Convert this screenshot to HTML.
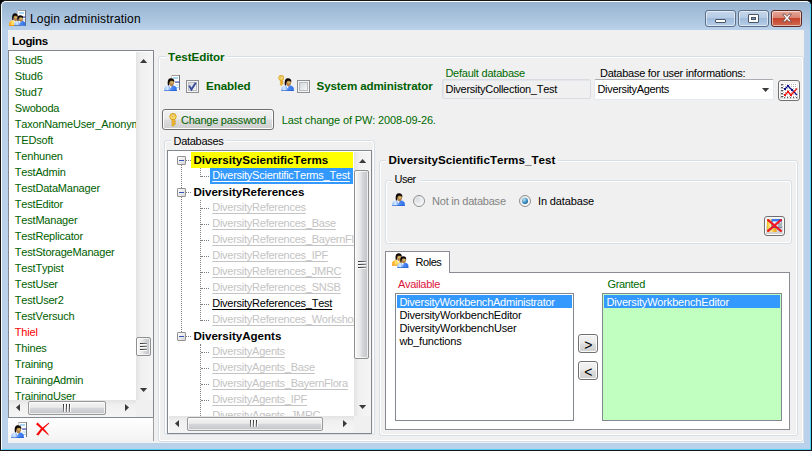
<!DOCTYPE html>
<html><head><meta charset="utf-8"><title>Login administration</title>
<style>
html,body{margin:0;padding:0;}
body{width:812px;height:451px;overflow:hidden;background:#000;position:relative;font-family:"Liberation Sans",sans-serif;font-size:11px;}
div,span,svg{position:absolute;box-sizing:border-box;}
.t{white-space:nowrap;line-height:13px;font-size:11px;color:#000;letter-spacing:-0.2px;font-kerning:none;}
.b{font-weight:bold;letter-spacing:0;font-size:11.6px;}
.g{color:#006000;}
.gr{color:#006a00;}
.r{color:#ff0000;}
.cr{color:#dc143c;}
.w{color:#fff;}
.u{text-decoration:underline;text-decoration-skip-ink:none;text-decoration-thickness:1px;text-underline-offset:2px;}
.lk{color:#c3c3c3;text-decoration:underline;text-decoration-skip-ink:none;text-decoration-thickness:1px;text-underline-offset:2px;}
.tvb{letter-spacing:-0.03px;}
.tvr{letter-spacing:-0.25px;}
.dis{color:#838383;}
.win{left:0;top:0;width:812px;height:451px;border-radius:6px 6px 0 0;background:#b9d1ea;border:1px solid #141414;overflow:hidden;}
.winin{left:0;top:0;width:810px;height:449px;border-radius:5px 5px 0 0;border:1px solid #fbfdff;border-bottom-color:#4fd0f8;border-right-color:#4fd0f8;background:linear-gradient(#97b3d0 0px,#b9d1ea 28px,#b9d1ea 100%);}
.client{left:8px;top:30px;width:796px;height:413px;background:#f0f0f0;}
.title{font-size:12px;line-height:15px;color:#000;}
.gb{border:1px solid #d5dfe5;border-radius:3px;box-shadow:inset 0 0 0 1px #fff;}
.gbl{background:#f0f0f0;padding:0 2px;}
.lb{border:1px solid #828790;background:#fff;overflow:hidden;}
.btn{border:1px solid #707070;border-radius:3px;background:linear-gradient(#f2f2f2 0%,#ebebeb 48%,#dddddd 52%,#cfcfcf 100%);box-shadow:inset 0 0 0 1px #fcfcfc;}
.tb{border:1px solid #abadb3;background:#fff;border-radius:2px;}
.sbv{background:linear-gradient(90deg,#e3e3e3,#f0f0f0 30%,#f5f5f5);}
.sbh{background:linear-gradient(#e3e3e3,#f0f0f0 30%,#f5f5f5);}
.thv{border:1px solid #8f8f8f;border-radius:2px;background:linear-gradient(90deg,#f8f8f8 0%,#e8e8ea 40%,#d4d5d8 60%,#c2c3c8 100%);box-shadow:inset 0 0 0 1px rgba(255,255,255,.7);}
.thh{border:1px solid #979797;border-radius:2px;background:linear-gradient(#f5f5f5 0%,#e9e9eb 45%,#d6d7da 50%,#c4c5c9 100%);box-shadow:inset 0 0 0 1px rgba(255,255,255,.7);}
.cb{border:1px solid #8e8f8f;background:#f4f4f4;}
.cbi{left:1px;top:1px;width:9px;height:9px;border:1px solid #b9bec4;background:linear-gradient(135deg,#d4d8dc,#f6f6f6);}
.sel{background:#3399ff;}
.dot{border-left:1px dotted #808080;width:1px;}
.doth{border-top:1px dotted #808080;height:1px;}
</style></head>
<body>
<div class="win"><div class="winin"></div></div>
<svg style="left:17px;top:10px" width="9" height="16"><rect x="0" y="0" width="9" height="16" fill="#fff"/><rect x="0" y="0" width="9" height="1" fill="#9c9c9c"/><rect x="8" y="0" width="1" height="16" fill="#707078"/><rect x="0" y="0" width="1" height="16" fill="#c8c8c8"/><rect x="2" y="2" width="5" height="2" fill="#a8d4f0"/><rect x="4.05" y="6.5" width="4.5" height="1.2" fill="#3848a8"/><rect x="4.5" y="9.5" width="3.6" height="1" fill="#a8d4f0"/><rect x="4.5" y="12" width="3.6" height="1" fill="#a8d4f0"/></svg>
<svg style="left:9.2px;top:12.8px" width="11.05" height="13.23" viewBox="0 0 13 13.5" preserveAspectRatio="none"><defs><linearGradient id="p3" x1="0" x2="1" y1="0" y2="0"><stop offset="0" stop-color="#ff9a10"/><stop offset="0.3" stop-color="#ffe26a"/><stop offset="1" stop-color="#ffb020"/></linearGradient></defs><path d="M0.2 13.2 L0.2 10.6 C0.4 8.8 2.2 7.6 4.4 7.2 L8.8 7.2 C11 7.6 12.8 8.8 12.8 10.6 L12.8 13.2 Z" fill="url(#p3)"/><path d="M0.2 12.4 L12.8 12.4 L12.8 13.2 L0.2 13.2 Z" fill="#e88a00"/><path d="M5 7.2 L6.6 10.6 L8.2 7.2 Z" fill="#ffffff"/><path d="M5 2.6 C6 1.6 9.6 1.8 10.1 3.6 C10.4 5.6 9.6 8.2 7.4 8.4 C5.6 8.4 4.8 6.4 5 2.6 Z" fill="#b8804e"/><ellipse cx="7.8" cy="4.6" rx="1.5" ry="1.1" fill="#c8c060"/><path d="M3.9 7.2 C3.5 4.8 3.6 2.4 4.6 1.2 C5.6 0 8.4 -0.1 9.6 1.2 C10.4 2.1 10.4 3.2 10.2 4 C9.4 2.8 7.6 2.6 6.2 3 C5.4 3.4 5.2 5.8 5 7.4 Z" fill="#100806"/></svg>
<svg style="left:14px;top:15px" width="11.57" height="10.8" viewBox="0 0 13 13.5" preserveAspectRatio="none"><defs><linearGradient id="p4" x1="0" x2="1" y1="0" y2="0"><stop offset="0" stop-color="#9cc4fb"/><stop offset="0.28" stop-color="#d6e8ff"/><stop offset="0.55" stop-color="#4f8cf4"/><stop offset="1" stop-color="#2f6fe8"/></linearGradient></defs><path d="M0.2 13.2 L0.2 10.6 C0.4 8.8 2.2 7.6 4.4 7.2 L8.8 7.2 C11 7.6 12.8 8.8 12.8 10.6 L12.8 13.2 Z" fill="url(#p4)"/><path d="M0.2 12.4 L12.8 12.4 L12.8 13.2 L0.2 13.2 Z" fill="#1f56c8"/><path d="M5 7.2 L6.6 10.6 L8.2 7.2 Z" fill="#ffffff"/><path d="M5 2.6 C6 1.6 9.6 1.8 10.1 3.6 C10.4 5.6 9.6 8.2 7.4 8.4 C5.6 8.4 4.8 6.4 5 2.6 Z" fill="#b8804e"/><ellipse cx="7.8" cy="4.6" rx="1.5" ry="1.1" fill="#c8c060"/><path d="M3.9 7.2 C3.5 4.8 3.6 2.4 4.6 1.2 C5.6 0 8.4 -0.1 9.6 1.2 C10.4 2.1 10.4 3.2 10.2 4 C9.4 2.8 7.6 2.6 6.2 3 C5.4 3.4 5.2 5.8 5 7.4 Z" fill="#100806"/></svg>
<span class="t title" style="left:30px;top:11.5px;letter-spacing:0.17px" id="title">Login administration</span>
<div class="" style="left:705px;top:10px;width:31px;height:17px;border:1px solid #5d7088;border-radius:3px;background:linear-gradient(#c4d6ec 0%,#b6cbe5 45%,#a0bbdb 50%,#b5cde8 100%);box-shadow:inset 0 0 0 1px rgba(255,255,255,.55);"></div>
<div class="" style="left:738px;top:10px;width:31px;height:17px;border:1px solid #5d7088;border-radius:3px;background:linear-gradient(#c4d6ec 0%,#b6cbe5 45%,#a0bbdb 50%,#b5cde8 100%);box-shadow:inset 0 0 0 1px rgba(255,255,255,.55);"></div>
<div class="" style="left:771px;top:10px;width:31px;height:17px;border:1px solid #5b2a22;border-radius:3px;background:linear-gradient(#e6a99c 0%,#d98473 45%,#c8432b 50%,#cf6850 100%);box-shadow:inset 0 0 0 1px rgba(255,255,255,.55);"></div>
<div class="" style="left:715px;top:19px;width:11px;height:4px;background:#fff;border:1px solid #4a5566;border-radius:1px;"></div>
<div class="" style="left:748px;top:14px;width:11px;height:9px;background:#fff;border:1px solid #4a5566;border-radius:1px;"></div>
<div class="" style="left:751px;top:17px;width:5px;height:3px;background:#7f96b6;border:1px solid #4a5566;"></div>
<svg style="left:780.5px;top:13px" width="12" height="10.4" viewBox="0 0 15 13"><path d="M2 1.5 L5 1.5 L7.5 4.3 L10 1.5 L13 1.5 L9.3 6.3 L13 11 L10 11 L7.5 8.2 L5 11 L2 11 L5.7 6.3 Z" fill="#fff" stroke="#5a4040" stroke-width="0.9"/></svg>
<div class="client"></div>
<span id="t1" class="t b" style="left:12px;top:34.2px;letter-spacing:-0.383px;">Logins</span>
<div class="" style="left:8px;top:418px;width:146px;height:23px;background:linear-gradient(#fff,#f3f3f3);"></div>
<div class="" style="left:153px;top:418px;width:1px;height:23px;background:#a0a0a0;"></div>
<div class="lb" style="left:8px;top:50px;width:146px;height:368px;"></div>
<div class="" style="left:9px;top:52px;width:127px;height:348px;overflow:hidden;"><span class="t g" style="left:5.8px;top:1.5px;" id="n0">Stud5</span><span class="t g" style="left:5.8px;top:17.5px;" id="n1">Stud6</span><span class="t g" style="left:5.8px;top:33.5px;" id="n2">Stud7</span><span class="t g" style="left:5.8px;top:49.5px;" id="n3">Swoboda</span><span class="t g" style="left:5.8px;top:65.5px;" id="n4">TaxonNameUser_Anonymous</span><span class="t g" style="left:5.8px;top:81.5px;" id="n5">TEDsoft</span><span class="t g" style="left:5.8px;top:97.5px;" id="n6">Tenhunen</span><span class="t g" style="left:5.8px;top:113.5px;" id="n7">TestAdmin</span><span class="t g" style="left:5.8px;top:129.5px;" id="n8">TestDataManager</span><span class="t g" style="left:5.8px;top:145.5px;" id="n9">TestEditor</span><span class="t g" style="left:5.8px;top:161.5px;" id="n10">TestManager</span><span class="t g" style="left:5.8px;top:177.5px;" id="n11">TestReplicator</span><span class="t g" style="left:5.8px;top:193.5px;" id="n12">TestStorageManager</span><span class="t g" style="left:5.8px;top:209.5px;" id="n13">TestTypist</span><span class="t g" style="left:5.8px;top:225.5px;" id="n14">TestUser</span><span class="t g" style="left:5.8px;top:241.5px;" id="n15">TestUser2</span><span class="t g" style="left:5.8px;top:257.5px;" id="n16">TestVersuch</span><span class="t r" style="left:5.8px;top:273.5px;" id="n17">Thiel</span><span class="t g" style="left:5.8px;top:289.5px;" id="n18">Thines</span><span class="t g" style="left:5.8px;top:305.5px;" id="n19">Training</span><span class="t g" style="left:5.8px;top:321.5px;" id="n20">TrainingAdmin</span><span class="t g" style="left:5.8px;top:337.5px;" id="n21">TrainingUser</span></div>
<div class="sbv" style="left:136px;top:52px;width:17px;height:348px;"></div>
<svg style="left:139.4px;top:57.5px" width="9.2" height="6"><polygon points="1,5 8.2,5 4.6,1" fill="#3a3a3a"/></svg>
<svg style="left:139.4px;top:387px" width="9.2" height="6"><polygon points="1,1 8.2,1 4.6,5" fill="#3a3a3a"/></svg>
<div class="thv" style="left:136px;top:337px;width:15px;height:19px;"></div>
<div class="" style="left:139.9px;top:343px;width:7.5px;height:1px;background:linear-gradient(90deg,#2c2c2c,#8a8a8a);box-shadow:0 1px 0 rgba(255,255,255,.85);"></div><div class="" style="left:139.9px;top:346px;width:7.5px;height:1px;background:linear-gradient(90deg,#2c2c2c,#8a8a8a);box-shadow:0 1px 0 rgba(255,255,255,.85);"></div><div class="" style="left:139.9px;top:349px;width:7.5px;height:1px;background:linear-gradient(90deg,#2c2c2c,#8a8a8a);box-shadow:0 1px 0 rgba(255,255,255,.85);"></div>
<div class="sbh" style="left:9px;top:400px;width:127px;height:17px;"></div>
<div class="" style="left:136px;top:400px;width:17px;height:17px;background:#f0f0f0;"></div>
<svg style="left:15px;top:402.9px" width="6" height="9.2"><polygon points="5,1 5,8.2 1,4.6" fill="#3a3a3a"/></svg>
<svg style="left:123.7px;top:402.9px" width="6" height="9.2"><polygon points="1,1 1,8.2 5,4.6" fill="#3a3a3a"/></svg>
<div class="thh" style="left:28px;top:401px;width:78px;height:14px;"></div>
<div class="" style="left:63.1px;top:404.1px;width:1px;height:7.5px;background:linear-gradient(#2c2c2c,#8a8a8a);box-shadow:1px 0 0 rgba(255,255,255,.85);"></div><div class="" style="left:66.1px;top:404.1px;width:1px;height:7.5px;background:linear-gradient(#2c2c2c,#8a8a8a);box-shadow:1px 0 0 rgba(255,255,255,.85);"></div><div class="" style="left:69.1px;top:404.1px;width:1px;height:7.5px;background:linear-gradient(#2c2c2c,#8a8a8a);box-shadow:1px 0 0 rgba(255,255,255,.85);"></div>
<svg style="left:18px;top:422px" width="9" height="15"><rect x="0" y="0" width="9" height="15" fill="#fff"/><rect x="0" y="0" width="9" height="1" fill="#9c9c9c"/><rect x="8" y="0" width="1" height="15" fill="#707078"/><rect x="0" y="0" width="1" height="15" fill="#c8c8c8"/><rect x="2" y="2" width="5" height="2" fill="#a8d4f0"/><rect x="4.05" y="6.5" width="4.5" height="1.2" fill="#3848a8"/><rect x="4.5" y="9.5" width="3.6" height="1" fill="#a8d4f0"/><rect x="4.5" y="12" width="3.6" height="1" fill="#a8d4f0"/></svg>
<svg style="left:11px;top:424.8px" width="13" height="13.5" viewBox="0 0 13 13.5" preserveAspectRatio="none"><defs><linearGradient id="p31" x1="0" x2="1" y1="0" y2="0"><stop offset="0" stop-color="#9cc4fb"/><stop offset="0.28" stop-color="#d6e8ff"/><stop offset="0.55" stop-color="#4f8cf4"/><stop offset="1" stop-color="#2f6fe8"/></linearGradient></defs><path d="M0.2 13.2 L0.2 10.6 C0.4 8.8 2.2 7.6 4.4 7.2 L8.8 7.2 C11 7.6 12.8 8.8 12.8 10.6 L12.8 13.2 Z" fill="url(#p31)"/><path d="M0.2 12.4 L12.8 12.4 L12.8 13.2 L0.2 13.2 Z" fill="#1f56c8"/><path d="M5 7.2 L6.6 10.6 L8.2 7.2 Z" fill="#ffffff"/><path d="M5 2.6 C6 1.6 9.6 1.8 10.1 3.6 C10.4 5.6 9.6 8.2 7.4 8.4 C5.6 8.4 4.8 6.4 5 2.6 Z" fill="#b8804e"/><ellipse cx="7.8" cy="4.6" rx="1.5" ry="1.1" fill="#c8c060"/><path d="M3.9 7.2 C3.5 4.8 3.6 2.4 4.6 1.2 C5.6 0 8.4 -0.1 9.6 1.2 C10.4 2.1 10.4 3.2 10.2 4 C9.4 2.8 7.6 2.6 6.2 3 C5.4 3.4 5.2 5.8 5 7.4 Z" fill="#100806"/></svg>
<svg style="left:35px;top:421px" width="16" height="17" viewBox="35 421 16 17"><path d="M36.0 424.2 L37.6 422.6 L42.6 427.4 L48.6 422.8 L49.2 423.4 L43.8 428.6 L48.0 433.4 L49.0 435.8 L47.2 434.2 L42.4 430.0 L38.4 435.6 L36.2 434.6 L41.0 428.6 Z" fill="#f80808"/></svg>
<div class="gb" style="left:158px;top:56px;width:646px;height:386px;"></div>
<div class="gbl" style="left:166px;top:50px;width:61px;height:13px;"></div>
<span id="t2" class="t b g" style="left:168px;top:50.2px;letter-spacing:-0.084px;">TestEditor</span>
<svg style="left:171px;top:75px" width="9" height="15"><rect x="0" y="0" width="9" height="15" fill="#fff"/><rect x="0" y="0" width="9" height="1" fill="#9c9c9c"/><rect x="8" y="0" width="1" height="15" fill="#707078"/><rect x="0" y="0" width="1" height="15" fill="#c8c8c8"/><rect x="2" y="2" width="5" height="2" fill="#a8d4f0"/><rect x="4.05" y="6.5" width="4.5" height="1.2" fill="#3848a8"/><rect x="4.5" y="9.5" width="3.6" height="1" fill="#a8d4f0"/><rect x="4.5" y="12" width="3.6" height="1" fill="#a8d4f0"/></svg>
<svg style="left:164px;top:77.8px" width="13" height="13.5" viewBox="0 0 13 13.5" preserveAspectRatio="none"><defs><linearGradient id="p37" x1="0" x2="1" y1="0" y2="0"><stop offset="0" stop-color="#9cc4fb"/><stop offset="0.28" stop-color="#d6e8ff"/><stop offset="0.55" stop-color="#4f8cf4"/><stop offset="1" stop-color="#2f6fe8"/></linearGradient></defs><path d="M0.2 13.2 L0.2 10.6 C0.4 8.8 2.2 7.6 4.4 7.2 L8.8 7.2 C11 7.6 12.8 8.8 12.8 10.6 L12.8 13.2 Z" fill="url(#p37)"/><path d="M0.2 12.4 L12.8 12.4 L12.8 13.2 L0.2 13.2 Z" fill="#1f56c8"/><path d="M5 7.2 L6.6 10.6 L8.2 7.2 Z" fill="#ffffff"/><path d="M5 2.6 C6 1.6 9.6 1.8 10.1 3.6 C10.4 5.6 9.6 8.2 7.4 8.4 C5.6 8.4 4.8 6.4 5 2.6 Z" fill="#b8804e"/><ellipse cx="7.8" cy="4.6" rx="1.5" ry="1.1" fill="#c8c060"/><path d="M3.9 7.2 C3.5 4.8 3.6 2.4 4.6 1.2 C5.6 0 8.4 -0.1 9.6 1.2 C10.4 2.1 10.4 3.2 10.2 4 C9.4 2.8 7.6 2.6 6.2 3 C5.4 3.4 5.2 5.8 5 7.4 Z" fill="#100806"/></svg>
<div class="cb" style="left:186px;top:80px;width:13px;height:13px;"><div class="cbi"></div></div>
<svg style="left:188px;top:82px" width="9" height="9" viewBox="0 0 9 9"><path d="M1.2 3.6 L3.4 7.6 L7.8 0.8" stroke="#3b4c9a" stroke-width="1.9" fill="none"/></svg>
<span id="t3" class="t b g" style="left:206px;top:79.2px;letter-spacing:-0.073px;">Enabled</span>
<svg style="left:278px;top:75px" width="6.4" height="11.2" viewBox="0 0 8 14"><circle cx="4" cy="3.6" r="3.2" fill="#f8dc6c" stroke="#d09818" stroke-width="0.9"/><circle cx="4" cy="2.6" r="1" fill="#fffbe0" stroke="#b88010" stroke-width="0.5"/><path d="M3 6.5 L3 12.5 L4 13.6 L5 12.5 L5 11.3 L6.4 11.3 L6.4 10 L5 10 L5 9 L6.4 9 L6.4 7.8 L5 7.8 L5 6.5 Z" fill="#f4b828" stroke="#c88c10" stroke-width="0.5"/></svg>
<svg style="left:281px;top:77.8px" width="13" height="13.5" viewBox="0 0 13 13.5" preserveAspectRatio="none"><defs><linearGradient id="p42" x1="0" x2="1" y1="0" y2="0"><stop offset="0" stop-color="#9cc4fb"/><stop offset="0.28" stop-color="#d6e8ff"/><stop offset="0.55" stop-color="#4f8cf4"/><stop offset="1" stop-color="#2f6fe8"/></linearGradient></defs><path d="M0.2 13.2 L0.2 10.6 C0.4 8.8 2.2 7.6 4.4 7.2 L8.8 7.2 C11 7.6 12.8 8.8 12.8 10.6 L12.8 13.2 Z" fill="url(#p42)"/><path d="M0.2 12.4 L12.8 12.4 L12.8 13.2 L0.2 13.2 Z" fill="#1f56c8"/><path d="M5 7.2 L6.6 10.6 L8.2 7.2 Z" fill="#ffffff"/><path d="M5 2.6 C6 1.6 9.6 1.8 10.1 3.6 C10.4 5.6 9.6 8.2 7.4 8.4 C5.6 8.4 4.8 6.4 5 2.6 Z" fill="#b8804e"/><ellipse cx="7.8" cy="4.6" rx="1.5" ry="1.1" fill="#c8c060"/><path d="M3.9 7.2 C3.5 4.8 3.6 2.4 4.6 1.2 C5.6 0 8.4 -0.1 9.6 1.2 C10.4 2.1 10.4 3.2 10.2 4 C9.4 2.8 7.6 2.6 6.2 3 C5.4 3.4 5.2 5.8 5 7.4 Z" fill="#100806"/></svg>
<div class="cb" style="left:297px;top:80px;width:13px;height:13px;"><div class="cbi"></div></div>
<span id="t4" class="t b g" style="left:316.6px;top:79.2px;letter-spacing:-0.128px;">System administrator</span>
<span id="t5" class="t gr" style="left:445.4px;top:67px;letter-spacing:-0.224px;">Default database</span>
<div class="tb" style="left:442px;top:79px;width:149px;height:20px;background:#f0f0f0;border-color:#d9dde2;box-shadow:inset 1px 1px 0 #e3e7eb;"></div>
<span id="t6" class="t " style="left:445.5px;top:83px;letter-spacing:-0.270px;">DiversityCollection_Test</span>
<span id="t7" class="t " style="left:600px;top:67px;letter-spacing:-0.260px;">Database for user informations:</span>
<div class="tb" style="left:594px;top:79px;width:180px;height:21px;border-color:#e3e9ef;border-top-color:#abadb3;"></div>
<span id="t8" class="t " style="left:597.5px;top:83px;letter-spacing:-0.328px;">DiversityAgents</span>
<svg style="left:760.9px;top:86.5px" width="9.2" height="6"><polygon points="1,1 8.2,1 4.6,5" fill="#3a3a3a"/></svg>
<div class="btn" style="left:778px;top:80px;width:22px;height:21px;"></div>
<svg style="left:780px;top:82px" width="18" height="17" viewBox="0 0 18 17"><rect x="1" y="1" width="16" height="15.5" fill="#fff"/><rect x="3" y="2" width="1" height="1" fill="#b8b8b8"/><rect x="3" y="4" width="1" height="1" fill="#b8b8b8"/><rect x="3" y="6" width="1" height="1" fill="#b8b8b8"/><rect x="3" y="8" width="1" height="1" fill="#b8b8b8"/><rect x="3" y="10" width="1" height="1" fill="#b8b8b8"/><rect x="3" y="12" width="1" height="1" fill="#b8b8b8"/><rect x="3" y="14" width="1" height="1" fill="#b8b8b8"/><rect x="5" y="2" width="1" height="1" fill="#b8b8b8"/><rect x="5" y="4" width="1" height="1" fill="#b8b8b8"/><rect x="5" y="6" width="1" height="1" fill="#b8b8b8"/><rect x="5" y="8" width="1" height="1" fill="#b8b8b8"/><rect x="5" y="10" width="1" height="1" fill="#b8b8b8"/><rect x="5" y="12" width="1" height="1" fill="#b8b8b8"/><rect x="5" y="14" width="1" height="1" fill="#b8b8b8"/><rect x="7" y="2" width="1" height="1" fill="#b8b8b8"/><rect x="7" y="4" width="1" height="1" fill="#b8b8b8"/><rect x="7" y="6" width="1" height="1" fill="#b8b8b8"/><rect x="7" y="8" width="1" height="1" fill="#b8b8b8"/><rect x="7" y="10" width="1" height="1" fill="#b8b8b8"/><rect x="7" y="12" width="1" height="1" fill="#b8b8b8"/><rect x="7" y="14" width="1" height="1" fill="#b8b8b8"/><rect x="9" y="2" width="1" height="1" fill="#b8b8b8"/><rect x="9" y="4" width="1" height="1" fill="#b8b8b8"/><rect x="9" y="6" width="1" height="1" fill="#b8b8b8"/><rect x="9" y="8" width="1" height="1" fill="#b8b8b8"/><rect x="9" y="10" width="1" height="1" fill="#b8b8b8"/><rect x="9" y="12" width="1" height="1" fill="#b8b8b8"/><rect x="9" y="14" width="1" height="1" fill="#b8b8b8"/><rect x="11" y="2" width="1" height="1" fill="#b8b8b8"/><rect x="11" y="4" width="1" height="1" fill="#b8b8b8"/><rect x="11" y="6" width="1" height="1" fill="#b8b8b8"/><rect x="11" y="8" width="1" height="1" fill="#b8b8b8"/><rect x="11" y="10" width="1" height="1" fill="#b8b8b8"/><rect x="11" y="12" width="1" height="1" fill="#b8b8b8"/><rect x="11" y="14" width="1" height="1" fill="#b8b8b8"/><rect x="13" y="2" width="1" height="1" fill="#b8b8b8"/><rect x="13" y="4" width="1" height="1" fill="#b8b8b8"/><rect x="13" y="6" width="1" height="1" fill="#b8b8b8"/><rect x="13" y="8" width="1" height="1" fill="#b8b8b8"/><rect x="13" y="10" width="1" height="1" fill="#b8b8b8"/><rect x="13" y="12" width="1" height="1" fill="#b8b8b8"/><rect x="13" y="14" width="1" height="1" fill="#b8b8b8"/><rect x="15" y="2" width="1" height="1" fill="#b8b8b8"/><rect x="15" y="4" width="1" height="1" fill="#b8b8b8"/><rect x="15" y="6" width="1" height="1" fill="#b8b8b8"/><rect x="15" y="8" width="1" height="1" fill="#b8b8b8"/><rect x="15" y="10" width="1" height="1" fill="#b8b8b8"/><rect x="15" y="12" width="1" height="1" fill="#b8b8b8"/><rect x="15" y="14" width="1" height="1" fill="#b8b8b8"/><rect x="1" y="2" width="2" height="1.4" fill="#555"/><rect x="1" y="5" width="2" height="1.4" fill="#555"/><rect x="1" y="8" width="2" height="1.4" fill="#555"/><rect x="1" y="11" width="2" height="1.4" fill="#555"/><rect x="1" y="14" width="2" height="1.4" fill="#555"/><rect x="4" y="15" width="1.2" height="1.2" fill="#555"/><rect x="7" y="15" width="1.2" height="1.2" fill="#555"/><rect x="10" y="15" width="1.2" height="1.2" fill="#555"/><rect x="13" y="15" width="1.2" height="1.2" fill="#555"/><rect x="16" y="15" width="1.2" height="1.2" fill="#555"/><path d="M4.9 7 L8 4 L12 8 L17 13" stroke="#10108c" stroke-width="1.2" fill="none"/><path d="M5 13 L8 9.7 L11 13 L17 6.5" stroke="#f01010" stroke-width="1.3" fill="none"/><rect x="4" y="6" width="2" height="2" fill="#10108c"/><rect x="7" y="3" width="2" height="2" fill="#10108c"/><rect x="11" y="7" width="2" height="2" fill="#10108c"/><rect x="4" y="12" width="2" height="2" fill="#f01010"/><rect x="7" y="8.7" width="2" height="2" fill="#f01010"/><rect x="10" y="12" width="2" height="2" fill="#f01010"/></svg>
<div class="btn" style="left:162px;top:109px;width:112px;height:21px;"></div>
<svg style="left:168.5px;top:112.5px" width="8" height="14" viewBox="0 0 8 14"><circle cx="4" cy="3.6" r="3.2" fill="#f8dc6c" stroke="#d09818" stroke-width="0.9"/><circle cx="4" cy="2.6" r="1" fill="#fffbe0" stroke="#b88010" stroke-width="0.5"/><path d="M3 6.5 L3 12.5 L4 13.6 L5 12.5 L5 11.3 L6.4 11.3 L6.4 10 L5 10 L5 9 L6.4 9 L6.4 7.8 L5 7.8 L5 6.5 Z" fill="#f4b828" stroke="#c88c10" stroke-width="0.5"/></svg>
<span id="t9" class="t g" style="left:181px;top:114px;letter-spacing:-0.245px;">Change password</span>
<span id="t10" class="t gr" style="left:281.7px;top:114px;letter-spacing:-0.143px;">Last change of PW: 2008-09-26.</span>
<div class="gb" style="left:164px;top:140px;width:211px;height:295px;"></div>
<div class="gbl" style="left:171px;top:134px;width:55px;height:13px;"></div>
<span id="t11" class="t " style="left:173.5px;top:134.5px;letter-spacing:-0.289px;">Databases</span>
<div class="lb" style="left:167px;top:150px;width:205px;height:284px;"></div>
<div class="" style="left:169px;top:152px;width:185px;height:264px;overflow:hidden;"><div class="dot" style="left:12px;top:8px;width:1px;height:176px;"></div><div class="dot" style="left:31px;top:16px;width:1px;height:9px;"></div><div class="dot" style="left:31px;top:48px;width:1px;height:121px;"></div><div class="dot" style="left:31px;top:192px;width:1px;height:80px;"></div><div class="" style="left:22px;top:0px;width:162px;height:16px;background:#ffff00;"></div><div class="doth" style="left:17px;top:8px;width:5px;height:1px;"></div><div class="" style="left:8px;top:4px;width:9px;height:9px;border:1px solid #919191;border-radius:1px;background:linear-gradient(135deg,#fff,#d6d6d6);"></div><div class="" style="left:10px;top:8px;width:5px;height:1px;background:#3552b8;"></div><span class="t b tvb" id="tr0" style="left:24.5px;top:0.6px;">DiversityScientificTerms</span><div class="doth" style="left:32px;top:24px;width:8px;height:1px;"></div><div class="sel" style="left:41px;top:16px;width:143px;height:16px;"></div><span class="t w u tvr" id="tr1" style="left:43.2px;top:16.5px;">DiversityScientificTerms_Test</span><div class="doth" style="left:17px;top:40px;width:5px;height:1px;"></div><div class="" style="left:8px;top:36px;width:9px;height:9px;border:1px solid #919191;border-radius:1px;background:linear-gradient(135deg,#fff,#d6d6d6);"></div><div class="" style="left:10px;top:40px;width:5px;height:1px;background:#3552b8;"></div><span class="t b tvb" id="tr2" style="left:24.5px;top:32.6px;">DiversityReferences</span><div class="doth" style="left:32px;top:56px;width:8px;height:1px;"></div><span class="t tvr lk" id="tr3" style="left:43.2px;top:48.5px;">DiversityReferences</span><div class="doth" style="left:32px;top:72px;width:8px;height:1px;"></div><span class="t tvr lk" id="tr4" style="left:43.2px;top:64.5px;">DiversityReferences_Base</span><div class="doth" style="left:32px;top:88px;width:8px;height:1px;"></div><span class="t tvr lk" id="tr5" style="left:43.2px;top:80.5px;">DiversityReferences_BayernFlora</span><div class="doth" style="left:32px;top:104px;width:8px;height:1px;"></div><span class="t tvr lk" id="tr6" style="left:43.2px;top:96.5px;">DiversityReferences_IPF</span><div class="doth" style="left:32px;top:120px;width:8px;height:1px;"></div><span class="t tvr lk" id="tr7" style="left:43.2px;top:112.5px;">DiversityReferences_JMRC</span><div class="doth" style="left:32px;top:136px;width:8px;height:1px;"></div><span class="t tvr lk" id="tr8" style="left:43.2px;top:128.5px;">DiversityReferences_SNSB</span><div class="doth" style="left:32px;top:152px;width:8px;height:1px;"></div><span class="t tvr u" id="tr9" style="left:43.2px;top:144.5px;">DiversityReferences_Test</span><div class="doth" style="left:32px;top:168px;width:8px;height:1px;"></div><span class="t tvr lk" id="tr10" style="left:43.2px;top:160.5px;">DiversityReferences_Workshop</span><div class="doth" style="left:17px;top:184px;width:5px;height:1px;"></div><div class="" style="left:8px;top:180px;width:9px;height:9px;border:1px solid #919191;border-radius:1px;background:linear-gradient(135deg,#fff,#d6d6d6);"></div><div class="" style="left:10px;top:184px;width:5px;height:1px;background:#3552b8;"></div><span class="t b tvb" id="tr11" style="left:24.5px;top:176.6px;">DiversityAgents</span><div class="doth" style="left:32px;top:200px;width:8px;height:1px;"></div><span class="t tvr lk" id="tr12" style="left:43.2px;top:192.5px;">DiversityAgents</span><div class="doth" style="left:32px;top:216px;width:8px;height:1px;"></div><span class="t tvr lk" id="tr13" style="left:43.2px;top:208.5px;">DiversityAgents_Base</span><div class="doth" style="left:32px;top:232px;width:8px;height:1px;"></div><span class="t tvr lk" id="tr14" style="left:43.2px;top:224.5px;">DiversityAgents_BayernFlora</span><div class="doth" style="left:32px;top:248px;width:8px;height:1px;"></div><span class="t tvr lk" id="tr15" style="left:43.2px;top:240.5px;">DiversityAgents_IPF</span><div class="doth" style="left:32px;top:264px;width:8px;height:1px;"></div><span class="t tvr lk" id="tr16" style="left:43.2px;top:256.5px;">DiversityAgents_JMRC</span></div>
<div class="sbv" style="left:354px;top:152px;width:17px;height:264px;"></div>
<svg style="left:357.9px;top:157.8px" width="9.2" height="6"><polygon points="1,5 8.2,5 4.6,1" fill="#3a3a3a"/></svg>
<svg style="left:357.9px;top:404px" width="9.2" height="6"><polygon points="1,1 8.2,1 4.6,5" fill="#3a3a3a"/></svg>
<div class="thv" style="left:354px;top:170px;width:15px;height:189px;"></div>
<div class="" style="left:358px;top:261.3px;width:7.5px;height:1px;background:linear-gradient(90deg,#2c2c2c,#8a8a8a);box-shadow:0 1px 0 rgba(255,255,255,.85);"></div><div class="" style="left:358px;top:264.3px;width:7.5px;height:1px;background:linear-gradient(90deg,#2c2c2c,#8a8a8a);box-shadow:0 1px 0 rgba(255,255,255,.85);"></div><div class="" style="left:358px;top:267.3px;width:7.5px;height:1px;background:linear-gradient(90deg,#2c2c2c,#8a8a8a);box-shadow:0 1px 0 rgba(255,255,255,.85);"></div>
<div class="sbh" style="left:169px;top:416px;width:185px;height:17px;"></div>
<div class="" style="left:354px;top:416px;width:17px;height:17px;background:#f0f0f0;"></div>
<svg style="left:174px;top:418.9px" width="6" height="9.2"><polygon points="5,1 5,8.2 1,4.6" fill="#3a3a3a"/></svg>
<svg style="left:342px;top:418.9px" width="6" height="9.2"><polygon points="1,1 1,8.2 5,4.6" fill="#3a3a3a"/></svg>
<div class="thh" style="left:187px;top:417px;width:136px;height:14px;"></div>
<div class="" style="left:250.4px;top:419.9px;width:1px;height:7.5px;background:linear-gradient(#2c2c2c,#8a8a8a);box-shadow:1px 0 0 rgba(255,255,255,.85);"></div><div class="" style="left:253.4px;top:419.9px;width:1px;height:7.5px;background:linear-gradient(#2c2c2c,#8a8a8a);box-shadow:1px 0 0 rgba(255,255,255,.85);"></div><div class="" style="left:256.4px;top:419.9px;width:1px;height:7.5px;background:linear-gradient(#2c2c2c,#8a8a8a);box-shadow:1px 0 0 rgba(255,255,255,.85);"></div>
<div class="gb" style="left:379px;top:160px;width:419px;height:276px;"></div>
<div class="gbl" style="left:386px;top:153px;width:172px;height:13px;"></div>
<span id="t12" class="t b" style="left:388.5px;top:153.2px;letter-spacing:0.045px;">DiversityScientificTerms_Test</span>
<div class="gb" style="left:385px;top:180px;width:407px;height:64px;"></div>
<div class="gbl" style="left:392px;top:173px;width:29px;height:13px;"></div>
<span id="t13" class="t " style="left:394.5px;top:173.2px;letter-spacing:-0.484px;">User</span>
<svg style="left:392px;top:192.6px" width="13" height="13.5" viewBox="0 0 13 13.5" preserveAspectRatio="none"><defs><linearGradient id="p80" x1="0" x2="1" y1="0" y2="0"><stop offset="0" stop-color="#9cc4fb"/><stop offset="0.28" stop-color="#d6e8ff"/><stop offset="0.55" stop-color="#4f8cf4"/><stop offset="1" stop-color="#2f6fe8"/></linearGradient></defs><path d="M0.2 13.2 L0.2 10.6 C0.4 8.8 2.2 7.6 4.4 7.2 L8.8 7.2 C11 7.6 12.8 8.8 12.8 10.6 L12.8 13.2 Z" fill="url(#p80)"/><path d="M0.2 12.4 L12.8 12.4 L12.8 13.2 L0.2 13.2 Z" fill="#1f56c8"/><path d="M5 7.2 L6.6 10.6 L8.2 7.2 Z" fill="#ffffff"/><path d="M5 2.6 C6 1.6 9.6 1.8 10.1 3.6 C10.4 5.6 9.6 8.2 7.4 8.4 C5.6 8.4 4.8 6.4 5 2.6 Z" fill="#b8804e"/><ellipse cx="7.8" cy="4.6" rx="1.5" ry="1.1" fill="#c8c060"/><path d="M3.9 7.2 C3.5 4.8 3.6 2.4 4.6 1.2 C5.6 0 8.4 -0.1 9.6 1.2 C10.4 2.1 10.4 3.2 10.2 4 C9.4 2.8 7.6 2.6 6.2 3 C5.4 3.4 5.2 5.8 5 7.4 Z" fill="#100806"/></svg>
<div class="" style="left:413px;top:195px;width:12px;height:12px;border-radius:50%;border:1px solid #8e8f8f;background:radial-gradient(circle at 35% 35%,#d9dde0,#fbfbfb 80%);"></div>
<div class="" style="left:518.5px;top:195px;width:12px;height:12px;border-radius:50%;border:1px solid #8e8f8f;background:radial-gradient(circle at 35% 35%,#d9dde0,#fbfbfb 80%);"></div><div class="" style="left:521.5px;top:198px;width:6px;height:6px;border-radius:50%;background:radial-gradient(circle at 35% 30%,#b5e4fb,#2a7db4 60%,#163f6b);"></div>
<span id="t14" class="t dis" style="left:432px;top:195px;letter-spacing:-0.217px;">Not in database</span>
<span id="t15" class="t " style="left:538px;top:195px;letter-spacing:-0.136px;">In database</span>
<div class="btn" style="left:764px;top:216px;width:21px;height:20px;"></div>
<svg style="left:767px;top:219px" width="15" height="13" viewBox="0 0 15 13"><defs><linearGradient id="cyl" x1="0" x2="1"><stop offset="0" stop-color="#f0b818"/><stop offset="0.35" stop-color="#fff0a0"/><stop offset="1" stop-color="#e89800"/></linearGradient></defs><rect x="0" y="0" width="9.5" height="13" fill="url(#cyl)"/><rect x="5" y="0" width="10" height="8.5" fill="#f4f4f4" stroke="#304890" stroke-width="0.8"/><rect x="5" y="0" width="10" height="2.4" fill="#3c78f0"/><rect x="11" y="4" width="4" height="4.5" fill="#a8b0b8"/><path d="M0.5 0.5 L14.5 12.5 M14.5 0.5 L0.5 12.5" stroke="#8a1060" stroke-width="2.4" opacity="0.55"/><path d="M0.5 0.5 L14.5 12.5 M14.5 0.5 L0.5 12.5" stroke="#ff1018" stroke-width="1.6"/></svg>
<div class="" style="left:385px;top:272px;width:405px;height:158px;background:#fff;border:1px solid #898c95;"></div>
<div class="" style="left:385px;top:251px;width:65px;height:22px;background:#fff;border:1px solid #898c95;border-bottom:none;"></div>
<svg style="left:392.4px;top:253.2px" width="12.35" height="12.825" viewBox="0 0 13 13.5" preserveAspectRatio="none"><defs><linearGradient id="p89" x1="0" x2="1" y1="0" y2="0"><stop offset="0" stop-color="#ff9a10"/><stop offset="0.3" stop-color="#ffe26a"/><stop offset="1" stop-color="#ffb020"/></linearGradient></defs><path d="M0.2 13.2 L0.2 10.6 C0.4 8.8 2.2 7.6 4.4 7.2 L8.8 7.2 C11 7.6 12.8 8.8 12.8 10.6 L12.8 13.2 Z" fill="url(#p89)"/><path d="M0.2 12.4 L12.8 12.4 L12.8 13.2 L0.2 13.2 Z" fill="#e88a00"/><path d="M5 7.2 L6.6 10.6 L8.2 7.2 Z" fill="#ffffff"/><path d="M5 2.6 C6 1.6 9.6 1.8 10.1 3.6 C10.4 5.6 9.6 8.2 7.4 8.4 C5.6 8.4 4.8 6.4 5 2.6 Z" fill="#b8804e"/><ellipse cx="7.8" cy="4.6" rx="1.5" ry="1.1" fill="#c8c060"/><path d="M3.9 7.2 C3.5 4.8 3.6 2.4 4.6 1.2 C5.6 0 8.4 -0.1 9.6 1.2 C10.4 2.1 10.4 3.2 10.2 4 C9.4 2.8 7.6 2.6 6.2 3 C5.4 3.4 5.2 5.8 5 7.4 Z" fill="#100806"/></svg>
<svg style="left:397.4px;top:255.6px" width="11.57" height="12.015" viewBox="0 0 13 13.5" preserveAspectRatio="none"><defs><linearGradient id="p90" x1="0" x2="1" y1="0" y2="0"><stop offset="0" stop-color="#9cc4fb"/><stop offset="0.28" stop-color="#d6e8ff"/><stop offset="0.55" stop-color="#4f8cf4"/><stop offset="1" stop-color="#2f6fe8"/></linearGradient></defs><path d="M0.2 13.2 L0.2 10.6 C0.4 8.8 2.2 7.6 4.4 7.2 L8.8 7.2 C11 7.6 12.8 8.8 12.8 10.6 L12.8 13.2 Z" fill="url(#p90)"/><path d="M0.2 12.4 L12.8 12.4 L12.8 13.2 L0.2 13.2 Z" fill="#1f56c8"/><path d="M5 7.2 L6.6 10.6 L8.2 7.2 Z" fill="#ffffff"/><path d="M5 2.6 C6 1.6 9.6 1.8 10.1 3.6 C10.4 5.6 9.6 8.2 7.4 8.4 C5.6 8.4 4.8 6.4 5 2.6 Z" fill="#b8804e"/><ellipse cx="7.8" cy="4.6" rx="1.5" ry="1.1" fill="#c8c060"/><path d="M3.9 7.2 C3.5 4.8 3.6 2.4 4.6 1.2 C5.6 0 8.4 -0.1 9.6 1.2 C10.4 2.1 10.4 3.2 10.2 4 C9.4 2.8 7.6 2.6 6.2 3 C5.4 3.4 5.2 5.8 5 7.4 Z" fill="#100806"/></svg>
<span id="t16" class="t " style="left:415.5px;top:256px;letter-spacing:-0.445px;">Roles</span>
<span id="t17" class="t cr" style="left:398px;top:278px;letter-spacing:-0.294px;">Available</span>
<span id="t18" class="t gr" style="left:607.4px;top:278px;letter-spacing:-0.308px;">Granted</span>
<div class="lb" style="left:395px;top:293px;width:179px;height:128px;"></div>
<div class="sel" style="left:397px;top:295px;width:175px;height:13px;"></div>
<span id="t19" class="t w" style="left:399.4px;top:296px;letter-spacing:-0.232px;">DiversityWorkbenchAdministrator</span>
<span id="t20" class="t " style="left:399.4px;top:309px;letter-spacing:-0.185px;">DiversityWorkbenchEditor</span>
<span id="t21" class="t " style="left:399.4px;top:322px;letter-spacing:-0.179px;">DiversityWorkbenchUser</span>
<span id="t22" class="t " style="left:399.4px;top:335px;letter-spacing:-0.176px;">wb_functions</span>
<div class="lb" style="left:602px;top:293px;width:180px;height:128px;background:#c0ffc0;"></div>
<div class="sel" style="left:604px;top:295px;width:176px;height:13px;"></div>
<span id="t23" class="t w" style="left:606.5px;top:296px;letter-spacing:-0.169px;">DiversityWorkbenchEditor</span>
<div class="btn" style="left:578px;top:334px;width:20px;height:19px;"></div>
<div class="btn" style="left:578px;top:361px;width:20px;height:19px;"></div>
<span id="t24" class="t " style="left:584.3px;top:337.5px;font-size:14px;line-height:15px;letter-spacing:0;">&gt;</span>
<span id="t25" class="t " style="left:584.3px;top:364.5px;font-size:14px;line-height:15px;letter-spacing:0;">&lt;</span>
</body></html>
